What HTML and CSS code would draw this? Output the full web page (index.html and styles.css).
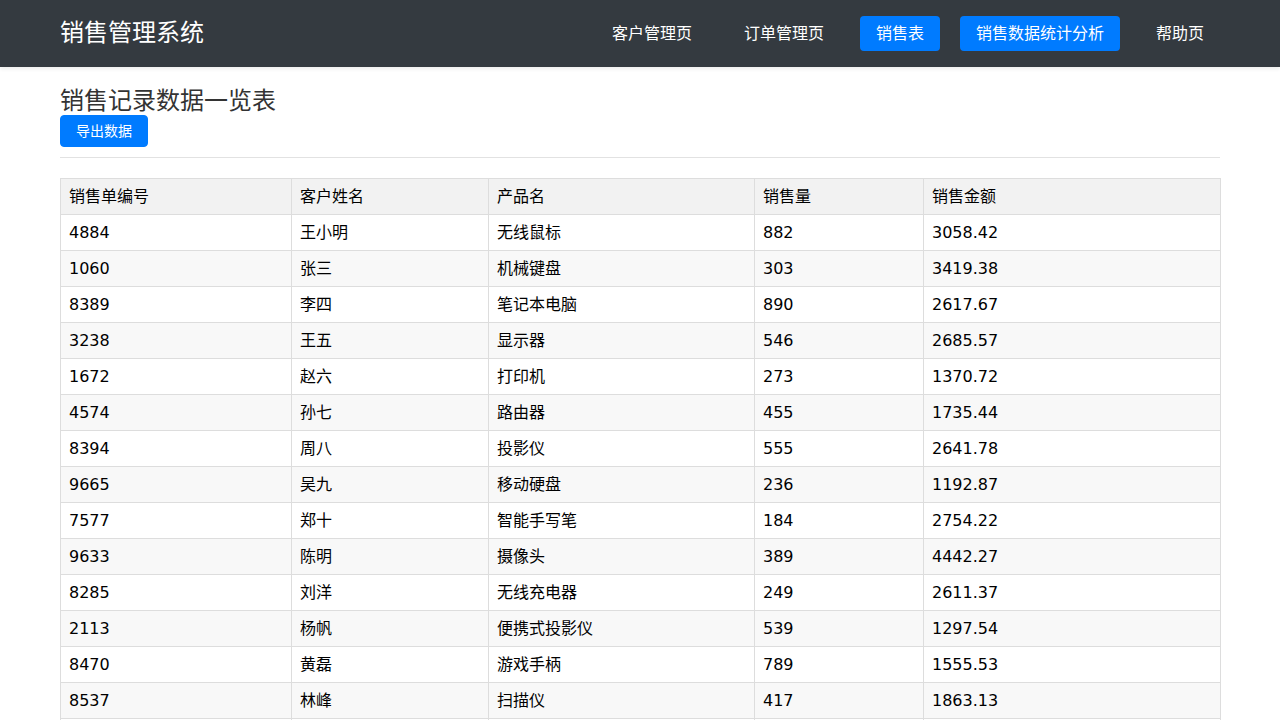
FILE: index.html
```html
<!DOCTYPE html>
<html lang="zh-CN">
<head>
<meta charset="utf-8">
<title>销售管理系统</title>
<link rel="stylesheet" href="styles.css">
</head>
<body>
<header class="navbar">
  <div class="container nav-inner">
    <a class="brand" href="#">销售管理系统</a>
    <nav class="nav">
      <a class="nav-link" href="#">客户管理页</a>
      <a class="nav-link" href="#">订单管理页</a>
      <a class="nav-link active" href="#">销售表</a>
      <a class="nav-link active" href="#">销售数据统计分析</a>
      <a class="nav-link" href="#">帮助页</a>
    </nav>
  </div>
</header>
<main class="container main">
  <h1 class="page-title">销售记录数据一览表</h1>
  <button class="btn" type="button">导出数据</button>
  <hr class="divider">
  <table class="data-table">
    <colgroup>
      <col class="c1"><col class="c2"><col class="c3"><col class="c4"><col class="c5">
    </colgroup>
    <thead>
      <tr><th>销售单编号</th><th>客户姓名</th><th>产品名</th><th>销售量</th><th>销售金额</th></tr>
    </thead>
    <tbody>
      <tr><td>4884</td><td>王小明</td><td>无线鼠标</td><td>882</td><td>3058.42</td></tr>
      <tr><td>1060</td><td>张三</td><td>机械键盘</td><td>303</td><td>3419.38</td></tr>
      <tr><td>8389</td><td>李四</td><td>笔记本电脑</td><td>890</td><td>2617.67</td></tr>
      <tr><td>3238</td><td>王五</td><td>显示器</td><td>546</td><td>2685.57</td></tr>
      <tr><td>1672</td><td>赵六</td><td>打印机</td><td>273</td><td>1370.72</td></tr>
      <tr><td>4574</td><td>孙七</td><td>路由器</td><td>455</td><td>1735.44</td></tr>
      <tr><td>8394</td><td>周八</td><td>投影仪</td><td>555</td><td>2641.78</td></tr>
      <tr><td>9665</td><td>吴九</td><td>移动硬盘</td><td>236</td><td>1192.87</td></tr>
      <tr><td>7577</td><td>郑十</td><td>智能手写笔</td><td>184</td><td>2754.22</td></tr>
      <tr><td>9633</td><td>陈明</td><td>摄像头</td><td>389</td><td>4442.27</td></tr>
      <tr><td>8285</td><td>刘洋</td><td>无线充电器</td><td>249</td><td>2611.37</td></tr>
      <tr><td>2113</td><td>杨帆</td><td>便携式投影仪</td><td>539</td><td>1297.54</td></tr>
      <tr><td>8470</td><td>黄磊</td><td>游戏手柄</td><td>789</td><td>1555.53</td></tr>
      <tr><td>8537</td><td>林峰</td><td>扫描仪</td><td>417</td><td>1863.13</td></tr>
      <tr><td>5216</td><td>何静</td><td>蓝牙音箱</td><td>328</td><td>2308.91</td></tr>
      <tr><td>6748</td><td>高远</td><td>平板电脑</td><td>612</td><td>3972.06</td></tr>
    </tbody>
  </table>
</main>
</body>
</html>
```

FILE: styles.css
```css
* {
  box-sizing: border-box;
}

body {
  margin: 0;
  font-family: "DejaVu Sans", "Noto Sans CJK SC", sans-serif;
  font-size: 16px;
  color: #000;
  background: #fff;
}

.container {
  width: 1160px;
  margin: 0 auto;
}

.navbar {
  background: #343a40;
  height: 67px;
  box-shadow: 0 2px 4px rgba(0, 0, 0, 0.08);
}

.nav-inner {
  height: 100%;
  display: flex;
  align-items: center;
  justify-content: space-between;
}

.brand {
  color: #fff;
  font-size: 24px;
  text-decoration: none;
  line-height: 1.2;
}

.nav {
  display: flex;
  gap: 20px;
  align-items: center;
}

.nav-link {
  color: #fff;
  text-decoration: none;
  font-size: 16px;
  line-height: 19px;
  padding: 8px 16px;
  border-radius: 4px;
}

.nav-link.active {
  background: #007bff;
}

.main {
  padding-top: 20px;
}

.page-title {
  margin: 0;
  font-size: 24px;
  font-weight: normal;
  line-height: 28px;
  color: #333;
}

.btn {
  display: block;
  font-family: inherit;
  font-size: 14px;
  line-height: 20px;
  color: #fff;
  background: #007bff;
  border: 1px solid #007bff;
  border-radius: 4px;
  padding: 5px 15px;
  cursor: pointer;
}

.divider {
  border: 0;
  border-top: 1px solid #e2e2e2;
  margin: 10px 0 20px;
}

.data-table {
  width: 100%;
  border-collapse: collapse;
  table-layout: fixed;
  border: 1px solid #dddddd;
}

.c1 { width: 231px; }
.c2 { width: 197px; }
.c3 { width: 266px; }
.c4 { width: 169px; }
.c5 { width: 297px; }

.data-table th,
.data-table td {
  border: 1px solid #dddddd;
  padding: 8px;
  line-height: 19px;
  text-align: left;
  font-weight: normal;
  white-space: nowrap;
}

.data-table thead th {
  background: #f2f2f2;
}

.data-table tbody tr:nth-child(even) {
  background: #f8f8f8;
}
```
